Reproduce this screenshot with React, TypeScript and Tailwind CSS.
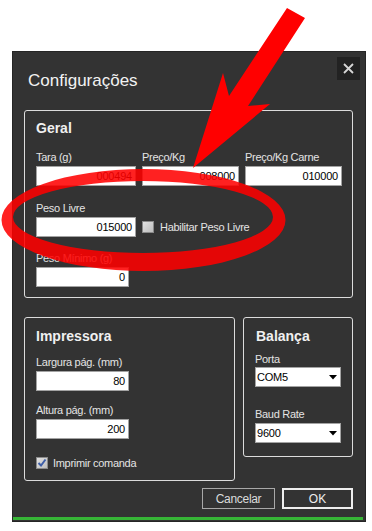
import React from 'react';

// Field box used by every numeric input in the dialog
function Field({ value, className = '' }: { value: string; className?: string }) {
  return (
    <div
      className={`h-[20px] bg-white border border-[#a3a3a3] pr-[3px] text-right text-[11px] leading-[18px] text-black tracking-[-0.2px] ${className}`}
    >
      {value}
    </div>
  );
}

function Label({ children }: { children: React.ReactNode }) {
  return <div className="text-[11px] leading-[13px] text-[#e4e4e4] tracking-[-0.3px]">{children}</div>;
}

function Combo({ value }: { value: string }) {
  return (
    <div className="w-[86px] h-[20px] bg-white border border-[#a3a3a3] flex items-center justify-between pl-[1px] pr-[3px]">
      <span className="text-[11px] leading-[18px] text-black tracking-[-0.2px]">{value}</span>
      <svg width="8" height="5" viewBox="0 0 8 5">
        <path d="M0 0 H8 L4 4.5 Z" fill="#000" />
      </svg>
    </div>
  );
}

function CheckBox({ checked = false }: { checked?: boolean }) {
  return (
    <div className="w-[12px] h-[12px] border border-[#8a8a8a] bg-[linear-gradient(135deg,#e2e2e2,#bdbdbd)] flex items-center justify-center">
      {checked && (
        <svg width="10" height="10" viewBox="0 0 10 10">
          <path d="M1.5 5 L4 7.5 L8.5 1.5" fill="none" stroke="#3d5ea8" strokeWidth="2" />
        </svg>
      )}
    </div>
  );
}

export default function App() {
  return (
    <div className="relative w-[372px] h-[531px] bg-white overflow-hidden font-['Liberation_Sans',Arial,sans-serif]">
      <div className="pt-[51px] pl-[12px]">
        <div className="w-[354px] bg-[#333333] border border-[#252525] flex flex-col pb-[1px]">
          {/* Header */}
          <div className="flex items-start justify-between pt-[5px] pl-[15px] pr-[5px]">
            <h1 className="mt-[14px] text-[17px] leading-[20px] text-[#f2f2f2]">Configurações</h1>
            <button className="w-[23px] h-[23px] bg-[#222222] flex items-center justify-center">
              <svg width="11" height="11" viewBox="0 0 11 11">
                <path d="M1 1 L10 10 M10 1 L1 10" stroke="#d6d6d6" strokeWidth="1.8" />
              </svg>
            </button>
          </div>

          {/* Geral */}
          <div className="ml-[11px] mr-[12px] mt-[19px] border border-[#dcdcdc] rounded-[3px] pl-[11px] pt-[9px] pb-[10px]">
            <div className="text-[14px] leading-[16px] font-bold text-[#f0f0f0]">Geral</div>
            <div className="mt-[15px] flex gap-[6px]">
              <div>
                <Label>Tara (g)</Label>
                <Field value="000494" className="mt-[2px] w-[100px]" />
              </div>
              <div>
                <Label>Preço/Kg</Label>
                <Field value="008000" className="mt-[2px] w-[97px]" />
              </div>
              <div>
                <Label>Preço/Kg Carne</Label>
                <Field value="010000" className="mt-[2px] w-[97px]" />
              </div>
            </div>
            <div className="mt-[16px]">
              <Label>Peso Livre</Label>
              <div className="mt-[2px] flex items-center">
                <Field value="015000" className="w-[100px]" />
                <div className="ml-[6px]">
                  <CheckBox />
                </div>
                <span className="ml-[6px] text-[11px] text-[#e4e4e4] tracking-[-0.3px]">Habilitar Peso Livre</span>
              </div>
            </div>
            <div className="mt-[15px]">
              <Label>Peso Mínimo (g)</Label>
              <Field value="0" className="mt-[2px] w-[93px]" />
            </div>
          </div>

          {/* Impressora / Balança */}
          <div className="ml-[11px] mr-[12px] mt-[19px] flex items-start gap-[8px]">
            <div className="w-[211px] border border-[#dcdcdc] rounded-[3px] pl-[11px] pt-[10px] pb-[11px]">
              <div className="text-[14px] leading-[16px] font-bold text-[#f0f0f0]">Impressora</div>
              <div className="mt-[12px]">
                <Label>Largura pág. (mm)</Label>
                <Field value="80" className="mt-[2px] w-[93px]" />
              </div>
              <div className="mt-[13px]">
                <Label>Altura pág. (mm)</Label>
                <Field value="200" className="mt-[2px] w-[93px]" />
              </div>
              <div className="mt-[18px] flex items-center gap-[5px]">
                <CheckBox checked />
                <span className="text-[11px] leading-[12px] text-[#e4e4e4] tracking-[-0.3px]">Imprimir comanda</span>
              </div>
            </div>
            <div className="w-[110px] border border-[#dcdcdc] rounded-[3px] pl-[11px] pt-[10px] pb-[13px]">
              <div className="pl-[1px] text-[14px] leading-[16px] font-bold text-[#f0f0f0]">Balança</div>
              <div className="mt-[9px]">
                <Label>Porta</Label>
                <div className="mt-[1px]">
                  <Combo value="COM5" />
                </div>
              </div>
              <div className="mt-[21px]">
                <Label>Baud Rate</Label>
                <div className="mt-[2px]">
                  <Combo value="9600" />
                </div>
              </div>
            </div>
          </div>

          {/* Buttons */}
          <div className="mt-[7px] mr-[12px] flex justify-end gap-[7px]">
            <button className="w-[73px] h-[21px] border border-[#a8a8a8] text-[12px] text-[#dcdcdc] tracking-[-0.3px]">
              Cancelar
            </button>
            <button className="w-[71px] h-[21px] border-2 border-[#eeeeee] text-[12px] text-[#eeeeee]">OK</button>
          </div>
          <div className="mt-[8px] mr-[2px] h-[3px] bg-[#36b536]" />
        </div>
      </div>

      {/* Annotation: red ellipse and arrow drawn over the screenshot */}
      <svg className="absolute left-0 top-0 pointer-events-none" width="372" height="531" viewBox="0 0 372 531">
        <path
          fillRule="evenodd"
          fill="#ff0000"
          fillOpacity="0.87"
          d="M1.5 220 A142 51 0 1 0 285.5 220 A142 51 0 1 0 1.5 220 Z M13 217 A130 36 0 1 1 273 217 A130 36 0 1 1 13 217 Z"
        />
        <path fill="#ff0000" d="M287 8 L305 18 L248 106 L270 104 L193 168 L223 73 L229 96 Z" />
      </svg>
    </div>
  );
}
